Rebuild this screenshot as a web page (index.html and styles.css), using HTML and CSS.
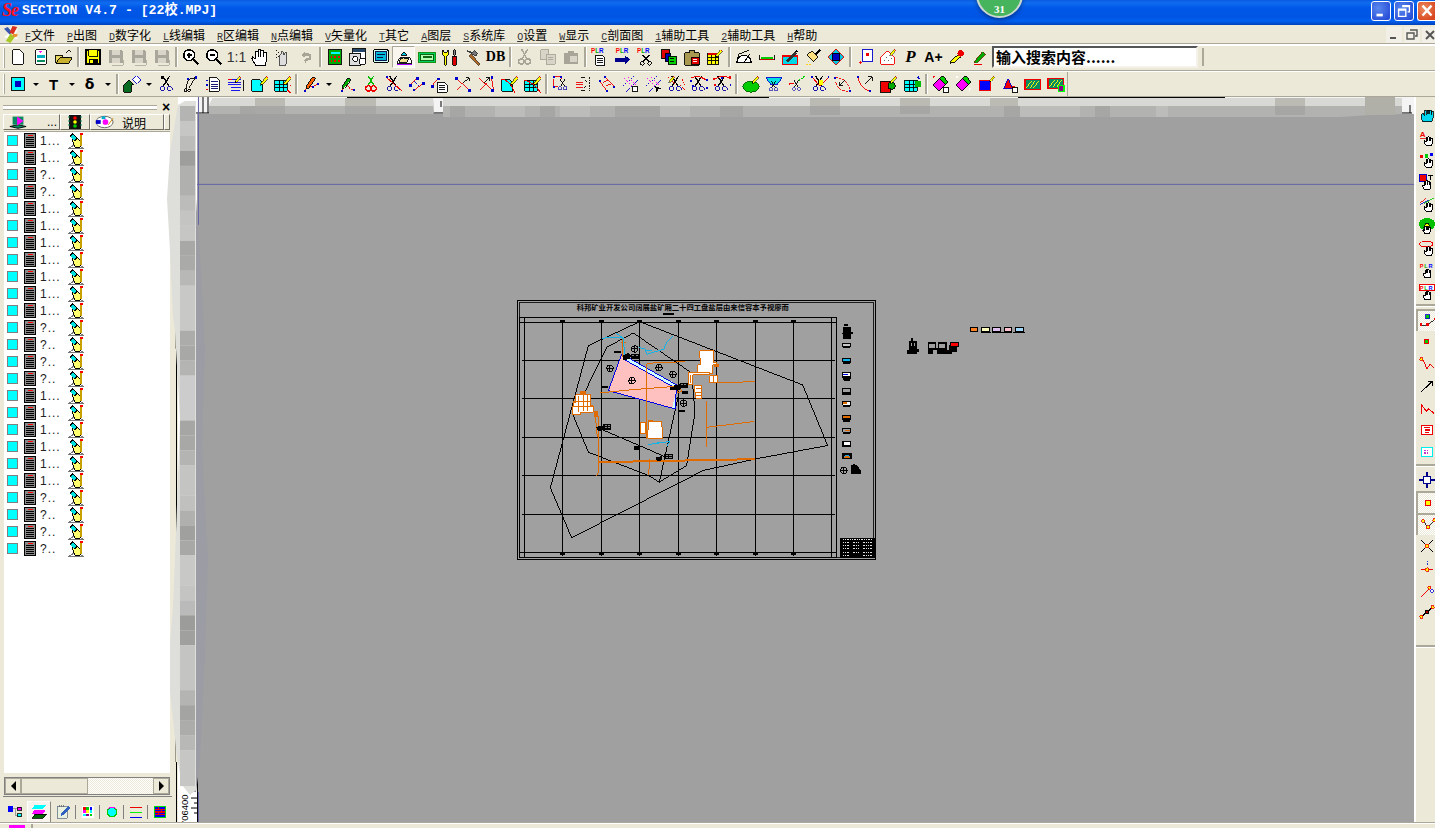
FILE: index.html
```html
<!DOCTYPE html>
<html lang="zh">
<head>
<meta charset="utf-8">
<title>SECTION V4.7 - [22校.MPJ]</title>
<link rel="stylesheet" href="styles.css">
</head>
<body>
<svg class="sprite" aria-hidden="true">
  <defs>
    <symbol id="hand" viewBox="0 0 20 20"><path d="M5 19L1 12l1-2 3 2V4h3v6V2h3v8V3h3v7V5h3v9l-1 5z" fill="#fff" stroke="#000" stroke-width="1" vector-effect="non-scaling-stroke"/></symbol>
    <symbol id="sc" viewBox="0 0 20 20"><path d="M5 1l7 11M13 1L6 12" stroke="#000" stroke-width="1.400" fill="none"/><circle cx="5" cy="15" r="2.600" fill="none" stroke="#00a"/><circle cx="13" cy="15" r="2.600" fill="none" stroke="#00a"/></symbol>
    <symbol id="pen" viewBox="0 0 20 20"><path d="M4 17l1-4 9-10 3 3-9 10z" fill="#ff0" stroke="#000"/><path d="M4 17l1-3 2 2z" fill="#000"/><path d="M14 3l3 3" stroke="#f00" stroke-width="1.400"/></symbol>
    <symbol id="grid" viewBox="0 0 20 20"><rect x="2" y="6" width="14" height="12" fill="#0ff"/><path d="M2 6h14M2 10h14M2 14h14M2 18h14M2 6v12M7 6v12M12 6v12M16 6v12" stroke="#000"/></symbol>
    <symbol id="cdoc" viewBox="0 0 20 20"><path d="M2 5h9l3 3v10H2z" fill="#0ff" stroke="#000"/></symbol>
    <symbol id="disk" viewBox="0 0 20 20"><path d="M2 2h14l2 2v13H2z" fill="#a9a69b"/><path d="M5 2h9v6H5zM5 11h9v6H5z" fill="#d9d6c9"/><path d="M6 19h12l1-6" fill="none" stroke="#b0ad9f"/></symbol>
    <symbol id="rowdoc" viewBox="0 0 12 15"><rect x=".5" y=".5" width="11" height="14" fill="#8a8a8a" stroke="#000"/><rect x="4" y="2" width="5" height="1" fill="#f00"/><path d="M2 4.500h8M2 6.500h8M2 8.500h8M2 10.500h8M2 12.500h8" stroke="#000"/></symbol>
    <symbol id="rowedit" viewBox="0 0 16 16"><path d="M0 15.500L8 11l8 4.500z" fill="#fff" stroke="#777"/><path d="M4 7l4-3 5 5-1 5H7z" fill="#ffff70" stroke="#000"/><path d="M1 3l3-3 6 5-3 3z" fill="#000"/><path d="M2 4l4 3 2-2-3-3z" fill="#00e0e0"/><rect x="12" y="2" width="2" height="11" fill="#c8a000"/><rect x="12" y="0" width="3" height="2" fill="#f00"/></symbol>
  </defs>
</svg>

<div class="app">
  <header class="titlebar">
    <span class="logo">S<i class="logo-e">e</i></span>
    <span class="title">SECTION V4.7 - [22校.MPJ]</span>
    <span class="badge">31</span>
    <div class="winbtns">
      <span class="wb"><svg class="wg" viewBox="0 0 20 20"><rect x="5" y="13" width="7" height="3" fill="#fff"/></svg></span>
      <span class="wb"><svg class="wg" viewBox="0 0 20 20"><path d="M8 4h8v7h-2M4 8h8v8H4z M4 9h8M8 5h8" fill="none" stroke="#fff" stroke-width="1.500"/></svg></span>
      <span class="wb close"><svg class="wg" viewBox="0 0 20 20"><path d="M5 4l10 11M15 4L5 15" stroke="#fff" stroke-width="2.600"/></svg></span>
    </div>
  </header>

  <nav class="menubar">
    <svg class="applogo" viewBox="0 0 17 20"><path d="M1 3l5 6-5 4 6 1 1 5 4-5 4 1-3-5 3-6-5 3-2-6-2 6z" fill="#fff"/><path d="M1 4l6 6 3-2-5-6z" fill="#3858b0"/><path d="M7 8l3-7 5 1-4 8z" fill="#d83020"/><path d="M3 17l5-8 5 3-5 7z" fill="#a8c828"/><path d="M11 9l5 1-2 3-4-1z" fill="#e89030"/></svg>
    <span class="mi"><u class="k">F</u>文件</span>
    <span class="mi"><u class="k">P</u>出图</span>
    <span class="mi"><u class="k">D</u>数字化</span>
    <span class="mi"><u class="k">L</u>线编辑</span>
    <span class="mi"><u class="k">R</u>区编辑</span>
    <span class="mi"><u class="k">N</u>点编辑</span>
    <span class="mi"><u class="k">V</u>矢量化</span>
    <span class="mi"><u class="k">T</u>其它</span>
    <span class="mi"><u class="k">A</u>图层</span>
    <span class="mi"><u class="k">S</u>系统库</span>
    <span class="mi"><u class="k">O</u>设置</span>
    <span class="mi"><u class="k">W</u>显示</span>
    <span class="mi"><u class="k">C</u>剖面图</span>
    <span class="mi"><u class="k">1</u>辅助工具</span>
    <span class="mi"><u class="k">2</u>辅助工具</span>
    <span class="mi"><u class="k">H</u>帮助</span>
    <div class="mdi">
      <span class="mb"><svg class="mg" viewBox="0 0 16 16"><rect x="4" y="10" width="6" height="2" fill="#555"/></svg></span>
      <span class="mb"><svg class="mg" viewBox="0 0 16 16"><path d="M6 3h7v6h-2M3 6h7v6H3z" fill="none" stroke="#555" stroke-width="1.400"/></svg></span>
      <span class="mb"><svg class="mg" viewBox="0 0 16 16"><path d="M4 4l8 8M12 4l-8 8" stroke="#555" stroke-width="2"/></svg></span>
    </div>
  </nav>

  <div class="toolbar first">
    <span class="grip"></span>
    <span class="b"><svg class="i" viewBox="0 0 20 20"><path d="M4 2h8l4 4v12H4z" fill="#fff" stroke="#000"/></svg></span>
    <span class="b"><svg class="i" viewBox="0 0 20 20"><path d="M4 2h12v16H4z" fill="#fff" stroke="#000"/><path d="M8 4h3M9.500 3v3" stroke="#f0f"/><path d="M6 8h8v3H6z" fill="#00b0c0"/><path d="M6 13h8v3H6z" fill="#0a8a60"/></svg></span>
    <span class="b"><svg class="i" viewBox="0 0 20 20"><path d="M1 8h7l1 2h6v7H1z" fill="#e8d860" stroke="#000"/><path d="M1 17l4-6h14l-4 6z" fill="#c8b030" stroke="#000"/><path d="M12 5l3-2 3 2" fill="none" stroke="#000"/></svg></span>
    <span class="sp"></span>
    <span class="b"><svg class="i" viewBox="0 0 20 20"><path d="M2 2h16v16H2z" fill="#ff0" stroke="#000" stroke-width="1.600"/><path d="M5 2h10v7H5z" fill="#ff0" stroke="#000"/><path d="M5 12h10v6H5z" fill="#000"/><path d="M7 13h3v4H7z" fill="#ff0"/></svg></span>
    <span class="b"><svg class="i"><use href="#disk"/></svg></span>
    <span class="b"><svg class="i"><use href="#disk"/></svg></span>
    <span class="b"><svg class="i"><use href="#disk"/></svg></span>
    <span class="sp"></span>
    <span class="b"><svg class="i" viewBox="0 0 20 20"><circle cx="8" cy="8" r="6" fill="#fff" stroke="#000" stroke-width="1.600"/><path d="M5 8h6M8 5v6" stroke="#000" stroke-width="1.600"/><path d="M13 13l5 5" stroke="#000" stroke-width="2.400"/></svg></span>
    <span class="b"><svg class="i" viewBox="0 0 20 20"><circle cx="8" cy="8" r="6" fill="#fff" stroke="#000" stroke-width="1.600"/><path d="M5 8h6" stroke="#000" stroke-width="1.600"/><path d="M13 13l5 5" stroke="#000" stroke-width="2.400"/></svg></span>
    <span class="b txt-ratio">1:1</span>
    <span class="b"><svg class="i"><use href="#hand"/></svg></span>
    <span class="b"><svg class="i" viewBox="0 0 20 20"><path d="M6 19V8l2-1V4h2v3h2V5h2v12l-1 2z" fill="#ddd" stroke="#444"/><path d="M2 3h1M4 5h1M2 7h1M4 9h1M2 11h1" stroke="#000"/></svg></span>
    <span class="b"><svg class="i" viewBox="0 0 20 20"><path d="M5 8l4-4v2h3a4 4 0 0 1 0 8h-2v3l-2-3 3-3h1a1 1 0 0 0 0-2H9v2z" fill="#a8a598"/></svg></span>
    <span class="sp"></span>
    <span class="b"><svg class="i" viewBox="0 0 20 20"><rect x="3" y="2" width="14" height="16" fill="#0a0" stroke="#000"/><path d="M5 4h10v3H5z" fill="#0ff"/><path d="M5 9h2v2H5zM9 9h2v2H9zM13 9h2v2h-2zM5 13h2v2H5zM9 13h2v2H9zM13 13h2v2h-2z" fill="#f00"/></svg></span>
    <span class="b"><svg class="i" viewBox="0 0 20 20"><rect x="4" y="1" width="14" height="12" fill="#fff" stroke="#000"/><rect x="4" y="1" width="14" height="3" fill="#246"/><rect x="1" y="6" width="12" height="13" fill="#ddd" stroke="#000"/><circle cx="7" cy="12" r="3" fill="#fff" stroke="#000"/><path d="M12 12h6v6h-6z" fill="#fff" stroke="#000"/></svg></span>
    <span class="b"><svg class="i" viewBox="0 0 20 20"><rect x="2" y="2" width="16" height="14" rx="1" fill="#cfe" stroke="#000" stroke-width="1.400"/><rect x="4" y="4" width="12" height="10" fill="#00b8d8" stroke="#004"/><path d="M6 7h8M6 10h6" stroke="#003"/></svg></span>
    <span class="b pressed"><svg class="i" viewBox="0 0 20 20"><path d="M2 17l3-6h12l2 6z" fill="#fff" stroke="#000"/><path d="M6 12l3-1 6 1-2 4H4z" fill="#f0e090" stroke="#000"/><path d="M7 8l3-4 3 4z" fill="#00c8e0" stroke="#000"/><path d="M2 18h17" stroke="#a0f" stroke-width="1.500"/></svg></span>
    <span class="b"><svg class="i" viewBox="0 0 20 20"><rect x="1" y="5" width="18" height="11" fill="#00d060" stroke="#080"/><rect x="3" y="7" width="14" height="7" fill="#b0ffb0" stroke="#050"/><path d="M5 9h10M5 11h10" stroke="#050"/></svg></span>
    <span class="b"><svg class="i" viewBox="0 0 20 20"><path d="M2 2v6l2 2v9h2V10l2-2V2L6 5H4z" fill="#ff0" stroke="#000"/><path d="M14 2h2v6h-2z" fill="#888" stroke="#000"/><path d="M13 9h4v10h-4z" fill="#d00" stroke="#000"/></svg></span>
    <span class="b"><svg class="i" viewBox="0 0 20 20"><path d="M3 3l6 2 3-2 3 3-2 3z" fill="#777" stroke="#333"/><path d="M8 7l10 11-2 1L6 9z" fill="#b06820" stroke="#543"/></svg></span>
    <span class="b txt-db">DB</span>
    <span class="sp"></span>
    <span class="b"><svg class="i" viewBox="0 0 20 20"><path d="M6 1l6 11M13 1L7 12" stroke="#a8a598" stroke-width="1.600"/><circle cx="6" cy="15" r="3" fill="none" stroke="#a8a598" stroke-width="1.600"/><circle cx="13" cy="15" r="3" fill="none" stroke="#a8a598" stroke-width="1.600"/></svg></span>
    <span class="b"><svg class="i" viewBox="0 0 20 20"><path d="M2 2h9v11H2z" fill="#d8d5c8" stroke="#a8a598"/><path d="M8 7h10v11H8z" fill="#d8d5c8" stroke="#a8a598"/><path d="M10 10h6M10 13h6" stroke="#a8a598"/></svg></span>
    <span class="b"><svg class="i" viewBox="0 0 20 20"><path d="M2 5h5V3h6v2h5v13H2z" fill="#a8a598"/><path d="M9 9h8v7H9z" fill="#d8d5c8"/></svg></span>
    <span class="sp"></span>
    <span class="b"><svg class="i" viewBox="0 0 20 20"><text class="plr" x="0" y="6"><tspan fill="#f00">P</tspan><tspan fill="#0a0">L</tspan><tspan fill="#00f">R</tspan></text><path d="M5 8h7l3 3v8H5z" fill="#fff" stroke="#000"/><path d="M7 12h6M7 14h6M7 16h6" stroke="#000"/></svg></span>
    <span class="b"><svg class="i" viewBox="0 0 20 20"><text class="plr" x="2" y="6"><tspan fill="#f00">P</tspan><tspan fill="#0a0">L</tspan><tspan fill="#00f">R</tspan></text><path d="M1 11h11V8l6 5-6 5v-3H1z" fill="#00008b"/></svg></span>
    <span class="b"><svg class="i" viewBox="0 0 20 20"><text class="plr" x="0" y="6"><tspan fill="#f00">P</tspan><tspan fill="#0a0">L</tspan><tspan fill="#00f">R</tspan></text><path d="M6 8l8 8M14 8l-8 8" stroke="#000" stroke-width="1.500"/><circle cx="6" cy="17" r="2" fill="none" stroke="#000"/><circle cx="14" cy="17" r="2" fill="none" stroke="#000"/></svg></span>
    <span class="b"><svg class="i" viewBox="0 0 20 20"><rect x="2" y="2" width="9" height="10" fill="#e00000" stroke="#000"/><rect x="6" y="6" width="6" height="9" fill="#0000b0" stroke="#000"/><rect x="9" y="9" width="9" height="9" fill="#00d000" stroke="#000"/><path d="M11 12h5M11 15h5" stroke="#000"/></svg></span>
    <span class="b"><svg class="i" viewBox="0 0 20 20"><path d="M2 5h5V3h6v2h5v14H2z" fill="#a89850" stroke="#000"/><rect x="9" y="10" width="9" height="8" fill="#e00000" stroke="#000"/><path d="M11 13h5M11 15h5" stroke="#fff"/></svg></span>
    <span class="b"><svg class="i" viewBox="0 0 20 20"><rect x="2" y="6" width="12" height="12" fill="#ff0" stroke="#000"/><path d="M2 10h12M2 14h12M6 6v12M10 6v12" stroke="#000"/><path d="M2 6h12v2H2z" fill="#d00"/><use href="#pen" x="8" y="0" width="12" height="12"/></svg></span>
    <span class="sp"></span>
    <span class="b"><svg class="i" viewBox="0 0 20 20"><path d="M2 16a8 8 0 0 1 16 0zM10 16l6-9" fill="#fff" stroke="#000" stroke-width="1.300"/><path d="M2 16l2-9 12-5" fill="none" stroke="#000"/></svg></span>
    <span class="b"><svg class="i" viewBox="0 0 20 20"><path d="M2 8v5h16V8" fill="none" stroke="#000"/><path d="M3 10h14v2H3z" fill="#0c0"/><path d="M2 13h16" stroke="#d00"/></svg></span>
    <span class="b"><svg class="i" viewBox="0 0 20 20"><path d="M2 9h16v9H2z" fill="#00d8e8" stroke="#e00" stroke-width="1.400"/><path d="M6 14l9-10 3 2-10 10z" fill="#333"/><path d="M15 4l3-2 1 3z" fill="#000"/></svg></span>
    <span class="b"><svg class="i" viewBox="0 0 20 20"><path d="M3 8l6-5 7 7-6 5z" fill="#ffe080" stroke="#000"/><path d="M13 7l5-5" stroke="#000" stroke-width="2.400"/><path d="M2 18h2M6 18h2M4 15h2" stroke="#fc0"/></svg></span>
    <span class="b"><svg class="i" viewBox="0 0 20 20"><path d="M1 10l9-9 9 9-9 9z" fill="#00c8e0" stroke="#e00"/><rect x="6" y="6" width="8" height="8" fill="#0000c0" stroke="#000"/></svg></span>
    <span class="sp"></span>
    <span class="b"><svg class="i" viewBox="0 0 20 20"><rect x="7" y="2" width="11" height="13" fill="#fff" stroke="#00c"/><rect x="11" y="5" width="3" height="4" fill="#e00"/><path d="M3 16h4M5 14v4" stroke="#e00"/></svg></span>
    <span class="b"><svg class="i" viewBox="0 0 20 20"><path d="M2 10l7-7 8 7v8H2z" fill="#fff" stroke="#e00"/><path d="M6 14h1M10 14h1M8 11h1M13 12h1" stroke="#555"/><use href="#pen" x="10" y="0" width="10" height="10"/></svg></span>
    <span class="b txt-p">P</span>
    <span class="b txt-a">A+</span>
    <span class="b"><svg class="i" viewBox="0 0 20 20"><path d="M2 17l2-4 8-6 2 3-7 6z" fill="#ff0" stroke="#000"/><circle cx="14" cy="6" r="3.500" fill="#e00"/></svg></span>
    <span class="b"><svg class="i" viewBox="0 0 20 20"><path d="M3 16l10-12 3 3L6 17z" fill="#0a0" stroke="#630"/><path d="M3 18h9" stroke="#e00" stroke-width="1.400"/></svg></span>
    <div class="search">输入搜索内容......</div>
    <span class="vgrip"></span>
  </div>

  <div class="toolbar second">
    <span class="grip"></span>
    <span class="b"><svg class="i" viewBox="0 0 20 20"><rect x="3" y="3" width="14" height="14" fill="#0ff" stroke="#000"/><rect x="7" y="7" width="6" height="6" fill="#0000c0"/></svg></span>
    <span class="ar"></span>
    <span class="b txt-t">T</span>
    <span class="ar"></span>
    <span class="b txt-d">δ</span>
    <span class="ar"></span>
    <span class="sp"></span>
    <span class="b"><svg class="i" viewBox="0 0 20 20"><path d="M1 19V11l6-6 5 5-3 2v7z" fill="#0a6a20" stroke="#000"/><path d="M11 5l4-4 4 4-4 4z" fill="#fff" stroke="#00c"/></svg></span>
    <span class="ar small"></span>
    <span class="b"><svg class="i"><use href="#sc"/><path d="M3 1h3v3H3z" fill="#000"/></svg></span>
    <span class="b"><svg class="i" viewBox="0 0 20 20"><path d="M16 3L8 5 5 15M16 3L9 14" fill="none" stroke="#000"/><circle cx="5" cy="17" r="1.500" fill="none" stroke="#000"/><circle cx="9" cy="17" r="1.500" fill="none" stroke="#000"/><path d="M7 3h2v2H7zM15 1h3v3h-3z" fill="#00c"/></svg></span>
    <span class="b"><svg class="i" viewBox="0 0 20 20"><path d="M2 5h2v2H2zM2 10h2v2H2z" fill="#00c"/><path d="M2 15h2v2H2z" fill="#e00"/><path d="M6 3h8l3 3v12H6z" fill="#fff" stroke="#000"/><path d="M8 7h7M8 10h7M8 13h7M8 15h7" stroke="#006"/></svg></span>
    <span class="b"><svg class="i" viewBox="0 0 20 20"><path d="M1 5h14M1 8h14M1 11h14M4 14h12M4 17h10" stroke="#00e"/><path d="M1 5h5" stroke="#f00"/><path d="M18 6v12" stroke="#000"/><use href="#pen" x="6" y="0" width="12" height="10"/></svg></span>
    <span class="b"><svg class="i"><use href="#cdoc"/><use href="#pen" x="8" y="0" width="12" height="12"/></svg></span>
    <span class="b"><svg class="i"><use href="#grid"/><use href="#pen" x="8" y="0" width="12" height="12"/><path d="M14 15l4 3M17 10l2 2" stroke="#e00"/></svg></span>
    <span class="sp"></span>
    <span class="b"><svg class="i" viewBox="0 0 20 20"><path d="M3 18l4-6 5 1 6-3" fill="none" stroke="#e00"/><path d="M2 17h2v2H2zM11 12h2v2h-2zM17 9h2v2h-2z" fill="#00c"/><path d="M5 12l7-10 3 2-7 10-3 1z" fill="#ff6000" stroke="#000"/></svg></span>
    <span class="ar wide"></span>
    <span class="b"><svg class="i" viewBox="0 0 20 20"><path d="M3 18l5-8 5 6 4 1" fill="none" stroke="#e00"/><path d="M2 17h2v2H2zM16 16h2v2h-2z" fill="#00c"/><path d="M4 12l6-9 3 2-7 9-2 1z" fill="#0a0" stroke="#000"/></svg></span>
    <span class="b"><svg class="i" viewBox="0 0 20 20"><path d="M7 1l6 10M13 1L7 11" stroke="#0b0" stroke-width="1.500"/><circle cx="7" cy="15" r="3" fill="none" stroke="#e00" stroke-width="1.400"/><circle cx="13" cy="15" r="3" fill="none" stroke="#e00" stroke-width="1.400"/></svg></span>
    <span class="b"><svg class="i"><use href="#sc"/><path d="M1 2l16 14" stroke="#e00"/><path d="M1 1h2v2H1z" fill="#00c"/></svg></span>
    <span class="b"><svg class="i" viewBox="0 0 20 20"><path d="M2 11l8-8M7 17l10-8" stroke="#e00"/><path d="M7 7l6 6" stroke="#00c" stroke-dasharray="2 1"/><path d="M1 10h3v3H1zM9 2h3v3H9zM5 15h3v3H5zM16 8h3v3h-3z" fill="#00c"/></svg></span>
    <span class="b"><svg class="i" viewBox="0 0 20 20"><path d="M1 12l7-8" stroke="#e00"/><path d="M0 11h3v3H0zM7 3h3v3H7z" fill="#00c"/><path d="M7 8h8l3 3v8H7z" fill="#fff" stroke="#000"/><path d="M9 12h7M9 14h7M9 16h7" stroke="#000"/></svg></span>
    <span class="b"><svg class="i" viewBox="0 0 20 20"><path d="M2 3l16 15M3 17l5-5" stroke="#e00"/><path d="M1 2h3v3H1zM16 16h3v3h-3z" fill="#00c"/><path d="M10 9l7-6M13 3h4v4" fill="none" stroke="#000"/></svg></span>
    <span class="b"><svg class="i" viewBox="0 0 20 20"><path d="M2 3l16 15M3 17l8-8" stroke="#e00"/><path d="M16 2l2 13" stroke="#e00"/><path d="M15 1h3v3h-3zM16 16h3v3h-3z" fill="#00c"/><path d="M8 9l6-6M10 3h4v4" fill="none" stroke="#000"/></svg></span>
    <span class="b"><svg class="i"><use href="#cdoc"/><path d="M1 4q8 0 14 14" fill="none" stroke="#e00"/><use href="#pen" x="8" y="0" width="12" height="12"/></svg></span>
    <span class="b"><svg class="i"><use href="#grid"/><use href="#pen" x="8" y="0" width="12" height="12"/><path d="M1 5q10 2 17 13" fill="none" stroke="#e00"/></svg></span>
    <span class="sp"></span>
    <span class="b"><svg class="i" viewBox="0 0 20 20"><path d="M2 2h8v2M2 4v9h5" fill="none" stroke="#e00"/><path d="M1 1h2v2H1zM9 1h2v2H9zM1 12h2v2H1z" fill="#00c"/><use href="#sc" x="5" y="2" width="15" height="18"/></svg></span>
    <span class="b"><svg class="i" viewBox="0 0 20 20"><path d="M1 8h8M1 11h8M1 14h8" stroke="#e00"/><path d="M11 6l2 2M11 14l2-2M7 3h4M7 17h4" stroke="#000"/><path d="M16 2v16" stroke="#000" stroke-dasharray="2 1"/></svg></span>
    <span class="b"><svg class="i" viewBox="0 0 20 20"><path d="M2 7l8 11M8 2l10 11M6 8l5-2M9 12l5-2" stroke="#e00"/><path d="M7 1h2v2H7zM1 6h2v2H1zM17 12h2v2h-2zM9 17h2v2H9z" fill="#00c"/></svg></span>
    <span class="b"><svg class="i" viewBox="0 0 20 20"><path d="M2 12L14 2M6 18L18 6" stroke="#00c" stroke-dasharray="2 1"/><path d="M3 3l12 12M8 2l9 9" stroke="#f0f" stroke-dasharray="2 2"/><rect x="13" y="13" width="5" height="5" fill="#fff" stroke="#000"/></svg></span>
    <span class="b"><svg class="i" viewBox="0 0 20 20"><path d="M2 12L14 2M6 18L18 6" stroke="#00c" stroke-dasharray="2 1"/><path d="M3 3l12 12M8 2l9 9" stroke="#f0f" stroke-dasharray="2 2"/><path d="M12 12l2 7 2-3 3-1z" fill="#000"/></svg></span>
    <span class="b"><svg class="i"><use href="#sc"/><path d="M1 2l7 7M15 4l4 8M13 10l6 6" stroke="#e00" stroke-dasharray="2 1"/><use href="#pen" x="0" y="0" width="9" height="9"/></svg></span>
    <span class="b"><svg class="i"><use href="#sc"/><path d="M1 3q8-4 16 3" fill="none" stroke="#e00"/><path d="M0 5h2v2H0zM16 4h2v2h-2zM2 10h2v2H2zM16 12h2v2h-2z" fill="#00c"/></svg></span>
    <span class="b"><svg class="i"><use href="#sc"/><path d="M1 5q8-7 17-1" fill="none" stroke="#e00"/><path d="M0 3h2v2H0zM16 1h2v2h-2zM1 9h2v2H1z" fill="#e00"/><path d="M17 9h2v2h-2zM8 2h2v2H8z" fill="#00c"/></svg></span>
    <span class="sp"></span>
    <span class="b"><svg class="i" viewBox="0 0 20 20"><path d="M1 13a9 6 0 0 1 18 0 9 6 0 0 1-18 0z" fill="#0c0" stroke="#060"/><use href="#pen" x="9" y="0" width="11" height="11"/></svg></span>
    <span class="b"><svg class="i" viewBox="0 0 20 20"><path d="M1 3h18l-5 7H6z" fill="#00e0e0" stroke="#00c"/><use href="#sc" x="3" y="5" width="14" height="15"/></svg></span>
    <span class="b"><svg class="i" viewBox="0 0 20 20"><path d="M1 10l6-1" stroke="#e00" stroke-width="1.500"/><path d="M12 6l7-5" stroke="#0c0" stroke-width="1.500" stroke-dasharray="2 1"/><use href="#sc" x="3" y="4" width="14" height="16"/></svg></span>
    <span class="b"><svg class="i"><use href="#sc"/><path d="M1 2l7 8 2 0 8-8" fill="none" stroke="#e00"/><path d="M0 1h2v2H0zM17 1h2v2h-2z" fill="#00c"/><path d="M8 5h4v5H8z" fill="#ff0"/></svg></span>
    <span class="b"><svg class="i" viewBox="0 0 20 20"><path d="M1 3q14 0 17 15" fill="none" stroke="#e00" stroke-dasharray="3 1"/><path d="M2 8q2 10 14 10" fill="none" stroke="#e00" stroke-dasharray="3 1"/><path d="M12 6l-6 6M6 8v4h4" fill="none" stroke="#000"/><path d="M0 2h2v2H0zM17 17h2v2h-2z" fill="#00c"/></svg></span>
    <span class="b"><svg class="i" viewBox="0 0 20 20"><path d="M1 2q2 12 13 16" fill="none" stroke="#e00"/><path d="M9 10l8-8M12 2h5v5" fill="none" stroke="#000"/><path d="M0 1h2v2H0zM13 17h2v2h-2z" fill="#00c"/></svg></span>
    <span class="b"><svg class="i" viewBox="0 0 20 20"><rect x="1" y="7" width="11" height="12" fill="#e00" stroke="#000"/><circle cx="13" cy="12" r="4" fill="#0a0" stroke="#000"/><use href="#pen" x="9" y="0" width="11" height="11"/></svg></span>
    <span class="b"><svg class="i"><use href="#grid"/><circle cx="15" cy="9" r="3.500" fill="#0b0"/><path d="M13 3l3-2 1 3" fill="#00c"/></svg></span>
    <span class="sp"></span>
    <span class="b"><svg class="i" viewBox="0 0 20 20"><path d="M1 11l7-7 7 7-7 7z" fill="#f0f" stroke="#000"/><path d="M8 4l4-3 6 7-3 3z" fill="#0c0" stroke="#000"/><path d="M1 2h2M2 1v2" stroke="#e00"/><rect x="13" y="14" width="5" height="5" fill="#fff" stroke="#000"/></svg></span>
    <span class="b"><svg class="i" viewBox="0 0 20 20"><path d="M1 11l7-7 7 7-7 7z" fill="#f0f" stroke="#000"/><path d="M8 4l4-3 6 7-3 3z" fill="#0c0" stroke="#000"/><path d="M1 1l2 2M3 1L1 3M15 15h3M16.500 14v4" stroke="#fff"/></svg></span>
    <span class="b"><svg class="i" viewBox="0 0 20 20"><rect x="2" y="6" width="12" height="11" fill="#00f" stroke="#e00" stroke-width="1.400"/><use href="#pen" x="11" y="0" width="9" height="9"/></svg></span>
    <span class="b"><svg class="i" viewBox="0 0 20 20"><path d="M3 15L8 4l5 11z" fill="#e00" stroke="#00c"/><path d="M12 12h4v3h-4z" fill="#e00"/><rect x="13" y="14" width="5" height="5" fill="#fff" stroke="#000"/></svg></span>
    <span class="b"><svg class="i" viewBox="0 0 20 20"><rect x="1" y="5" width="17" height="11" fill="#0a8a60" stroke="#e00" stroke-width="1.400"/><path d="M3 14l5-7M7 14l5-7M11 14l5-7" stroke="#ff0"/></svg></span>
    <span class="b"><svg class="i" viewBox="0 0 20 20"><rect x="1" y="4" width="17" height="11" fill="#0a8a60" stroke="#e00" stroke-width="1.400"/><path d="M3 13l5-7M7 13l5-7M11 13l5-7" stroke="#ff0"/><rect x="13" y="12" width="6" height="6" fill="#808" stroke="#0f0" stroke-width="1.400"/></svg></span>
    <span class="end"></span>
  </div>

  <main class="main">
    <aside class="side">
      <div class="side-top"><span class="side-grip"></span><span class="side-x">×</span></div>
      <div class="cols">
        <span class="col col-a"><svg class="ci" viewBox="0 0 20 14"><path d="M1 12l9-2 9 2-9 2z" fill="#0a8a60" stroke="#000"/><path d="M4 1h12v9H4z" fill="#0a8a60"/><path d="M9 1l7 5-7 5z" fill="#f0f"/></svg><span class="dots">...</span></span>
        <span class="col col-b"><svg class="ci" viewBox="0 0 14 14"><path d="M1 0h12v14H1z" fill="#111"/><circle cx="7" cy="3" r="1.800" fill="#f00"/><circle cx="7" cy="7" r="1.800" fill="#ff0"/><circle cx="7" cy="11" r="1.800" fill="#0c0"/><path d="M0 2h2M12 2h2M0 6h2M12 6h2M0 10h2M12 10h2" stroke="#0a8a60"/></svg></span>
        <span class="col col-c"><svg class="cp" viewBox="0 0 20 14"><ellipse cx="10" cy="7" rx="9" ry="6" fill="#fff" stroke="#666"/><path d="M1 5h5v4H1z" fill="#00c"/><circle cx="11" cy="7" r="3" fill="#f0f"/><path d="M7 1h4v3H7z" fill="#0ac"/><path d="M14 10l5-7" stroke="#c80"/></svg><b class="say">说明</b></span>
        <span class="col col-d"></span>
      </div>
      <ul class="list">
        <li class="row"><span class="cb"></span><svg class="rd"><use href="#rowdoc"/></svg><span class="rt">1...</span><svg class="re"><use href="#rowedit"/></svg></li>
        <li class="row"><span class="cb"></span><svg class="rd"><use href="#rowdoc"/></svg><span class="rt">1...</span><svg class="re"><use href="#rowedit"/></svg></li>
        <li class="row"><span class="cb"></span><svg class="rd"><use href="#rowdoc"/></svg><span class="rt">?..</span><svg class="re"><use href="#rowedit"/></svg></li>
        <li class="row"><span class="cb"></span><svg class="rd"><use href="#rowdoc"/></svg><span class="rt">?..</span><svg class="re"><use href="#rowedit"/></svg></li>
        <li class="row"><span class="cb"></span><svg class="rd"><use href="#rowdoc"/></svg><span class="rt">1...</span><svg class="re"><use href="#rowedit"/></svg></li>
        <li class="row"><span class="cb"></span><svg class="rd"><use href="#rowdoc"/></svg><span class="rt">1...</span><svg class="re"><use href="#rowedit"/></svg></li>
        <li class="row"><span class="cb"></span><svg class="rd"><use href="#rowdoc"/></svg><span class="rt">1...</span><svg class="re"><use href="#rowedit"/></svg></li>
        <li class="row"><span class="cb"></span><svg class="rd"><use href="#rowdoc"/></svg><span class="rt">1...</span><svg class="re"><use href="#rowedit"/></svg></li>
        <li class="row"><span class="cb"></span><svg class="rd"><use href="#rowdoc"/></svg><span class="rt">1...</span><svg class="re"><use href="#rowedit"/></svg></li>
        <li class="row"><span class="cb"></span><svg class="rd"><use href="#rowdoc"/></svg><span class="rt">1...</span><svg class="re"><use href="#rowedit"/></svg></li>
        <li class="row"><span class="cb"></span><svg class="rd"><use href="#rowdoc"/></svg><span class="rt">1...</span><svg class="re"><use href="#rowedit"/></svg></li>
        <li class="row"><span class="cb"></span><svg class="rd"><use href="#rowdoc"/></svg><span class="rt">?..</span><svg class="re"><use href="#rowedit"/></svg></li>
        <li class="row"><span class="cb"></span><svg class="rd"><use href="#rowdoc"/></svg><span class="rt">?..</span><svg class="re"><use href="#rowedit"/></svg></li>
        <li class="row"><span class="cb"></span><svg class="rd"><use href="#rowdoc"/></svg><span class="rt">?..</span><svg class="re"><use href="#rowedit"/></svg></li>
        <li class="row"><span class="cb"></span><svg class="rd"><use href="#rowdoc"/></svg><span class="rt">?..</span><svg class="re"><use href="#rowedit"/></svg></li>
        <li class="row"><span class="cb"></span><svg class="rd"><use href="#rowdoc"/></svg><span class="rt">1...</span><svg class="re"><use href="#rowedit"/></svg></li>
        <li class="row"><span class="cb"></span><svg class="rd"><use href="#rowdoc"/></svg><span class="rt">1...</span><svg class="re"><use href="#rowedit"/></svg></li>
        <li class="row"><span class="cb"></span><svg class="rd"><use href="#rowdoc"/></svg><span class="rt">1...</span><svg class="re"><use href="#rowedit"/></svg></li>
        <li class="row"><span class="cb"></span><svg class="rd"><use href="#rowdoc"/></svg><span class="rt">1...</span><svg class="re"><use href="#rowedit"/></svg></li>
        <li class="row"><span class="cb"></span><svg class="rd"><use href="#rowdoc"/></svg><span class="rt">1...</span><svg class="re"><use href="#rowedit"/></svg></li>
        <li class="row"><span class="cb"></span><svg class="rd"><use href="#rowdoc"/></svg><span class="rt">1...</span><svg class="re"><use href="#rowedit"/></svg></li>
        <li class="row"><span class="cb"></span><svg class="rd"><use href="#rowdoc"/></svg><span class="rt">?..</span><svg class="re"><use href="#rowedit"/></svg></li>
        <li class="row"><span class="cb"></span><svg class="rd"><use href="#rowdoc"/></svg><span class="rt">?..</span><svg class="re"><use href="#rowedit"/></svg></li>
        <li class="row"><span class="cb"></span><svg class="rd"><use href="#rowdoc"/></svg><span class="rt">?..</span><svg class="re"><use href="#rowedit"/></svg></li>
        <li class="row"><span class="cb"></span><svg class="rd"><use href="#rowdoc"/></svg><span class="rt">?..</span><svg class="re"><use href="#rowedit"/></svg></li>
      </ul>
      <div class="hscroll">
        <span class="sb"><i class="tri-l"></i></span>
        <span class="thumb"></span>
        <span class="track"></span>
        <span class="sb"><i class="tri-r"></i></span>
      </div>
      <div class="tabs">
        <span class="tab wide"><svg class="i" viewBox="0 0 20 20"><rect x="1" y="3" width="7" height="7" fill="#00f"/><path d="M8 6h5M10 6v8h3" fill="none" stroke="#888"/><rect x="13" y="4" width="5" height="4" fill="#f0f" stroke="#000"/><rect x="13" y="12" width="5" height="4" fill="#0ff" stroke="#000"/></svg></span>
        <span class="tab wide on"><svg class="i" viewBox="0 0 20 20"><path d="M5 1h14l-4 5H1z" fill="#0ff"/><path d="M5 7h14l-4 5H1z" fill="#f0f"/><path d="M5 13h14l-4 5H1z" fill="#060" stroke="#000"/></svg></span>
        <span class="tab wide"><svg class="i" viewBox="0 0 20 20"><path d="M3 3h12v15H3z" fill="#e8f0e0" stroke="#678"/><path d="M5 1v3M8 1v3M11 1v3" stroke="#666"/><path d="M7 15l1-3 9-9 2 2-9 9z" fill="#3060c0"/></svg></span>
        <span class="tsep"></span>
        <span class="tab"><svg class="i" viewBox="0 0 20 20"><rect x="3" y="3" width="14" height="14" fill="#fff"/><path d="M4 4h3v3H4z" fill="#e00"/><path d="M8 4h3v3H8z" fill="#0c0"/><path d="M12 4h3v3h-3z" fill="#00f"/><path d="M4 8h3v3H4z" fill="#f0f"/><path d="M8 8h3v3H8z" fill="#ff0"/><path d="M12 8h3v3h-3z" fill="#0ff"/><path d="M4 12h3v3H4z" fill="#0ff"/><path d="M8 12h3v3H8z" fill="#808"/><path d="M12 12h3v3h-3z" fill="#0c0"/></svg></span>
        <span class="tsep"></span>
        <span class="tab"><svg class="i" viewBox="0 0 20 20"><circle cx="10" cy="10" r="6" fill="#0ff" stroke="#0c0" stroke-width="1.400"/><path d="M5 6a7 7 0 0 1 10 0" fill="none" stroke="#f0f" stroke-width="1.400"/></svg></span>
        <span class="tsep"></span>
        <span class="tab"><svg class="i" viewBox="0 0 20 20"><path d="M2 4.500h16" stroke="#e00" stroke-width="1.300"/><path d="M2 10.500h16" stroke="#0e0" stroke-width="1.300"/><path d="M2 16.500h16" stroke="#00e" stroke-width="1.300"/></svg></span>
        <span class="tsep"></span>
        <span class="tab"><svg class="i" viewBox="0 0 20 20"><rect x="3" y="3" width="14" height="14" fill="#00e" stroke="#0d0" stroke-width="1.400"/><path d="M4 7h12M4 10h12M4 13h12M8 4v3M12 7v3M8 10v3" stroke="#e00" stroke-width="1.400"/></svg></span>
      </div>
    </aside>

    <section class="work">
      <svg class="canvas" viewBox="172 96 1242 727" preserveAspectRatio="none">
        <rect x="172" y="96" width="1242" height="727" fill="#a0a0a0"/>
        <!-- ruler strips -->
        <rect x="172" y="96" width="6" height="727" fill="#ece9d8"/>
        <rect x="178" y="96" width="19" height="727" fill="#fff"/>
        <rect x="197" y="96" width="1217" height="17" fill="#f4f4f4"/>
        <path d="M175.500 320v28M175.500 715v47" stroke="#9a9888"/>
        <path d="M176.500 348v200M176.500 762v61M197.500 762v61" stroke="#000"/>
        <path d="M193 112h16M433 112h10M1368 112h19M1398 112h14M347 96.500h422M1018 96.500h207" stroke="#000"/>
        <path d="M198.500 96v128M198.500 792v31" stroke="#6464a8"/>
        <path d="M197 183.500h1217" stroke="#6464a8"/>
        <path d="M203 96v16M208 96v16M441 100v6M1410 104v8" stroke="#000"/>
        <text class="ruler" transform="translate(188 826) rotate(-90)">706400</text>
        <path d="M191 798h6M191 808h6M194 803h3M194 813h3" stroke="#000"/>

        <!-- masked strip: left column -->
        <path d="M195 104L196 198L200 254L205 348L202 447L208 560L205 654L200 762L196 792L190 792z" fill="#9c9ca4"/>
        <path d="M178 104L170 151L167 198L170 250L173 315L175 330L180 419L175 560L173 607L170 644L170 691L177 757L182 785L190 795L196 790V100H185z" fill="#dedeDA"/>
        <g>
          <rect x="180" y="105" width="15" height="15" fill="#b4b4b2"/><rect x="180" y="120" width="15" height="15" fill="#c6c6c4"/><rect x="180" y="135" width="15" height="15" fill="#bcbcba"/><rect x="180" y="150" width="15" height="15" fill="#9e9e9c"/>
          <rect x="180" y="165" width="15" height="30" fill="#b0b0ae"/><rect x="180" y="195" width="15" height="15" fill="#bcbcba"/><rect x="180" y="210" width="15" height="15" fill="#c4c4c2"/><rect x="180" y="225" width="15" height="15" fill="#c6c6c4"/>
          <rect x="180" y="240" width="15" height="15" fill="#a8a8a6"/><rect x="180" y="255" width="15" height="15" fill="#aaaaa8"/><rect x="180" y="270" width="15" height="15" fill="#b8b8b6"/><rect x="180" y="285" width="15" height="45" fill="#c8c8c6"/>
          <rect x="180" y="330" width="15" height="15" fill="#acacaa"/><rect x="180" y="345" width="15" height="15" fill="#a8a8a6"/><rect x="180" y="360" width="15" height="15" fill="#b4b4b2"/><rect x="180" y="375" width="15" height="45" fill="#cccccc"/>
          <rect x="180" y="420" width="15" height="15" fill="#a6a6a4"/><rect x="180" y="435" width="15" height="15" fill="#a8a8a6"/><rect x="180" y="450" width="15" height="15" fill="#b4b4b2"/><rect x="180" y="465" width="15" height="30" fill="#c4c4c2"/>
          <rect x="180" y="495" width="15" height="15" fill="#c0c0be"/><rect x="180" y="510" width="15" height="15" fill="#b0b0ae"/><rect x="180" y="525" width="15" height="15" fill="#a0a09e"/><rect x="180" y="540" width="15" height="15" fill="#a8a8a6"/>
          <rect x="180" y="555" width="15" height="30" fill="#c8c8c6"/><rect x="180" y="585" width="15" height="15" fill="#c4c4c2"/><rect x="180" y="600" width="15" height="15" fill="#bababa"/><rect x="180" y="615" width="15" height="15" fill="#9c9c9a"/>
          <rect x="180" y="630" width="15" height="15" fill="#a0a09e"/><rect x="180" y="645" width="15" height="45" fill="#c4c4c2"/><rect x="180" y="690" width="15" height="15" fill="#b4b4b2"/><rect x="180" y="705" width="15" height="15" fill="#a4a4a2"/>
          <rect x="180" y="720" width="15" height="15" fill="#acacaa"/><rect x="180" y="735" width="15" height="15" fill="#b8b8b6"/><rect x="180" y="750" width="15" height="36" fill="#c6c6c4"/>
        </g>

        <!-- masked strip: top -->
        <path d="M209 105L213 97H433L434 112 432 113H209zM443 112V97H1402V113L1370 114L1340 116H443z" fill="#b2b2b0"/>
        <path d="M209 105L213 97H433V105zM443 105V97H1402V105z" fill="#d8d8d4"/>
        <path d="M255 97h30v8h-30zM345 97h31v8h-31zM810 97h30v8h-30zM900 97h30v8h-30zM990 97h28v8h-28zM1275 97h30v8h-30z" fill="#bbbbb3"/>
        <path d="M240 105h15v8h-15zM450 105h15v11h-15zM540 105h15v11h-15zM615 105h45v11h-45zM720 105h23v11h-23zM810 105h30v9h-30zM900 105h30v8h-30zM1004 105h16v11h-16zM1095 105h15v11h-15zM1275 105h30v9h-30z" fill="#a6a6a4"/>
        <path d="M255 105h30v8h-30zM345 105h31v8h-31z" fill="#a8a8a6"/>
        <path d="M1020 105h60v11h-60zM1156 105h12v11h-12zM495 105h30v11h-30zM560 105h30v11h-30zM660 105h30v11h-30z" fill="#bcbcba"/>
        <rect x="1365" y="92" width="30" height="22" fill="#b0b0a8"/>

        <!-- plan drawing -->
        <g class="plan" transform="translate(510 295) scale(.33333)">
          <rect x="23" y="14" width="1074" height="778" fill="none" stroke="#000" stroke-width="4"/>
          <rect x="29" y="20" width="1062" height="766" fill="none" stroke="#000" stroke-width="2.500"/>
          <path d="M560 14h537" stroke="#000" stroke-width="3"/>
          <text class="plan-title" x="200" y="42">科邦矿业开发公司阔展盐矿厢二十四工盘盐层由来信容本予视廖而</text>
          <rect x="458" y="52" width="35" height="6" fill="#000"/>
          <rect x="29" y="66" width="951" height="720" fill="none" stroke="#000" stroke-width="4"/>
          <path d="M43 66v720M966 66v720M29 80h951M29 772h951" stroke="#000" stroke-width="3"/>
          <path d="M157 72v710M274 72v710M389 72v710M505 72v710M619 72v710M737 72v710M851 72v710M35 195h940M35 310h940M35 425h940M35 540h940M35 656h940" stroke="#000" stroke-width="3"/>
          <path d="M150 76h14M267 76h14M382 76h14M498 76h14M612 76h14M730 76h14M844 76h14M150 775h14M267 775h14M382 775h14M498 775h14M612 775h14M730 775h14M844 775h14" stroke="#000" stroke-width="6"/>

          <path d="M389 78L878 268 953 450 738 490 580 525 185 727 121 577 235 150z" fill="none" stroke="#000" stroke-width="3"/>
          <path d="M370 112L290 155 190 360 235 470 415 540 448 560 530 510 555 350 545 232 370 112" fill="none" stroke="#000" stroke-width="3"/>
          <path d="M505 300L448 560M260 395L480 490" fill="none" stroke="#000" stroke-width="3"/>

          <path d="M335 175L500 268 495 340 295 285z" fill="#ffc0c0"/>
          <path d="M340 178L500 266 498 278 345 193zM500 278L495 338 487 336z" fill="#d0ffff"/>
          <path d="M335 175L500 268 495 340 295 285zM345 193L497 278" fill="none" stroke="#0000e8" stroke-width="3"/>

          <g fill="none" stroke="#e06c00" stroke-width="3">
            <path d="M270 292L370 282 500 272"/>
            <path d="M410 205v225M410 203L525 198"/>
            <path d="M265 500L735 491" stroke-width="6"/>
            <path d="M265 360v170l-6 12M255 350L262 425"/>
            <path d="M590 315v140M592 395L732 378M620 262L735 258"/>
            <path d="M415 540L420 490M500 290q14-15 14-2-4 4-14 2"/>
            <path d="M333 142h14M338 125v60"/>
          </g>
          <g fill="#fff" stroke="#e06c00" stroke-width="3">
            <path d="M570 166h42v36h8v6h-12v26h-45v-26h10v-20h-3z"/>
            <path d="M535 232h65v6h-52v28h-13z"/>
            <path d="M600 240h24v22h-24zM553 270h22v38h-18z"/>
            <path d="M415 378h40l3 50h-45zM392 380h15v34h-15z"/>
            <path d="M190 320h8v-22h44v32h8v20h-38v8h-25z"/>
          </g>
          <path d="M205 300h3v50h-3zM218 296h3v50h-3zM232 296h3v50h-3zM190 315h52v3h-52zM190 332h60v3h-60zM558 278h14v3h-14zM558 288h14v3h-14zM558 298h14v3h-14zM610 240h3v20h-3zM540 238h3v25h-3z" fill="#e06c00"/>
          <path d="M252 345h11v20h-11zM210 286h18v8h-18zM415 372h15v8h-15zM612 204h14v10h-14z" fill="#e06c00"/>

          <g fill="none" stroke="#10b4e8" stroke-width="3">
            <path d="M275 128L318 124 340 128 345 190M318 112l22 15"/>
            <path d="M388 156L405 160 410 176 430 170 462 160 470 140 490 120M405 165h22"/>
            <path d="M415 447L480 438 470 452M440 440h25"/>
          </g>

          <g fill="#000">
            <path d="M312 166h22v7h-22zM275 270h18v8h-18zM480 275h22v8h-22zM515 287h20v7h-20zM505 343h20v5h-20z"/>
            <path d="M338 180l18-8 8 8-6 10-20 4zM490 268l22-2 2 14-12 6-8-8z"/>
            <path d="M258 394l20-4 4 12-18 6zM372 452h16v12h-16zM437 486l18-4 2 12-16 4z"/>
            <rect x="280" y="385" width="23" height="18"/><rect x="510" y="262" width="23" height="16"/><rect x="463" y="475" width="26" height="17"/><rect x="362" y="175" width="26" height="15"/>
          </g>
          <path d="M284 390h6M293 390h6M284 397h6M293 397h6M514 267h6M523 267h6M467 480h7M478 480h7M467 486h7M478 486h7M366 180h7M377 180h7" stroke="#a0a0a0" stroke-width="2.500"/>
          <g fill="none" stroke="#000" stroke-width="3">
            <circle cx="374" cy="160" r="10"/><circle cx="300" cy="218" r="10"/><circle cx="447" cy="216" r="10"/><circle cx="489" cy="236" r="10"/><circle cx="366" cy="255" r="10"/><circle cx="521" cy="323" r="10"/>
            <path d="M364 160h20M374 150v20M290 218h20M300 208v20M437 216h20M447 206v20M479 236h20M489 226v20M356 255h20M366 245v20M511 323h20M521 313v20"/>
          </g>

          <!-- legend -->
          <g fill="#000">
            <path d="M998 94h26v9h-26zM1003 84h12v6h-12zM996 116h32v-6h-4v-6h-24zM998 116h24v14h-24z"/>
            <path d="M997 142h26v10l-4 6h-18l-4-6z"/><path d="M997 187h26v12l-4 6h-18l-4-6z"/><path d="M997 229h26v18l-4 8h-18l-4-8z"/><path d="M997 277h26v20h-26z"/><path d="M997 317h26v12l-4 6h-18l-4-6z"/><path d="M997 357h26v14l-4 8h-18l-4-8z"/><path d="M997 397h26v12l-4 6h-18l-4-6z"/><path d="M997 435h26v18h-26z"/><path d="M997 472h28v18h-28z"/>
            <path d="M1024 510l8-4 12 6 6 10 3 4v10h-29z"/>
          </g>
          <rect x="1000" y="146" width="20" height="4" fill="#c8c8c8"/><rect x="1000" y="190" width="20" height="5" fill="#10b4e8"/><rect x="1000" y="232" width="20" height="9" fill="#fff"/><path d="M1000 236h14" stroke="#0000e8" stroke-width="3"/><rect x="1000" y="281" width="20" height="9" fill="#a0a0a0"/><rect x="1000" y="320" width="20" height="9" fill="#fff"/><path d="M1000 320h10v6h-10z" fill="#e06c00"/><rect x="1000" y="360" width="20" height="7" fill="#e06c00"/><rect x="1000" y="400" width="20" height="8" fill="#a0a0a0"/><path d="M1005 404h15" stroke="#e06c00" stroke-width="4"/><rect x="1001" y="439" width="20" height="10" fill="#fff"/><path d="M1001 486q9-12 20 0" stroke="#10a0e8" stroke-width="3" fill="#e06c00"/>
          <circle cx="1002" cy="525" r="10" fill="none" stroke="#000" stroke-width="3"/><path d="M992 525h20M1002 515v20" stroke="#000" stroke-width="3"/>
          <path d="M990 727h105v60h-105z" fill="#000"/>
          <path d="M998 740h22M1030 740h16M1060 740h26M998 750h22M1030 750h16M1060 750h26M998 760h22M1030 760h16M1060 760h26M998 770h22M1030 770h16M1060 770h26M998 780h22M1060 780h26M998 733h88" stroke="#e0e0e0" stroke-width="3" stroke-dasharray="4 3"/>
        </g>

        <!-- stray symbols beside the plan -->
        <g class="plan" transform="translate(900 320) scale(.33333)">
          <path d="M26 60h6v-8h6v8h8v-8h-0v8h6v25h4v10h-6v5H22v-13h4z" fill="#000"/>
          <path d="M33 68h4v8h-4zM42 68h4v8h-4z" fill="#a0a0a0"/>
          <path d="M84 65h24v22h-8v14H84zM114 65h26v22h16v14h-44v-12h-6v-8h8zM150 65h26v14h-6v14h-22v-8h-2z" fill="#000"/>
          <path d="M88 70h16v12H88zM118 70h18v12h-18z" fill="#a0a0a0"/><rect x="153" y="68" width="20" height="8" fill="#f00"/>
          <rect x="211" y="18" width="24" height="17" fill="#000"/><rect x="214" y="21" width="18" height="10" fill="#ff8020"/>
          <path d="M243 35h30v3h-30zM275 35h30v3h-30zM307 35h30v3h-30zM340 35h34v3h-34z" fill="#000"/>
          <rect x="244" y="18" width="26" height="17" fill="#000"/><rect x="247" y="21" width="20" height="10" fill="#ffffc0"/>
          <rect x="276" y="18" width="26" height="17" fill="#000"/><rect x="279" y="21" width="20" height="10" fill="#e0c0f0"/>
          <rect x="311" y="18" width="26" height="17" fill="#000"/><rect x="314" y="21" width="20" height="10" fill="#ffc0d0"/>
          <rect x="345" y="18" width="26" height="17" fill="#000"/><rect x="348" y="21" width="20" height="10" fill="#a0d8ff"/>
        </g>
      </svg>
    </section>

    <aside class="rightbar">
      <span class="rb"><svg class="i" viewBox="0 0 20 20"><path d="M3 8v6l2 3h11l2-6V4h-2v4h-1V3h-2v5h-1V3h-2v5H9V3H7v6H6V7H4z" fill="#00d8f0" stroke="#000"/></svg></span>
      <span class="rb"><svg class="i" viewBox="0 0 20 20"><text class="ra" x="1" y="9">A</text><path d="M1 10h8" stroke="#e00"/><use href="#hand" x="5" y="7" width="14" height="13"/></svg></span>
      <span class="rb"><svg class="i" viewBox="0 0 20 20"><path d="M1 4h4v4H1z" fill="#e00"/><path d="M7 3h4v4H7z" fill="#0c0"/><path d="M14 1h4v4h-4z" fill="#00e"/><use href="#hand" x="5" y="7" width="14" height="13"/></svg></span>
      <span class="rb"><svg class="i" viewBox="0 0 20 20"><rect x="1" y="1" width="8" height="8" fill="#e00" stroke="#00c" stroke-width="1.500"/><path d="M11 2h7M14.500 2v6" stroke="#000" stroke-width="1.600"/><use href="#hand" x="3" y="7" width="14" height="13"/></svg></span>
      <span class="rb"><svg class="i" viewBox="0 0 20 20"><path d="M1 9l8-6" stroke="#e00"/><path d="M1 11l12-6" stroke="#00c"/><path d="M6 10l13-8" stroke="#0c0"/><use href="#hand" x="5" y="7" width="14" height="13"/></svg></span>
      <span class="rb"><svg class="i" viewBox="0 0 20 20"><path d="M0 7a10 7 0 0 1 20 0c0 4-3 8-7 8H7C3 15 0 11 0 7z" fill="#00c000"/><path d="M6 12l2-5h4l2 5z" fill="#ff0" stroke="#000"/><use href="#hand" x="4" y="9" width="12" height="11"/></svg></span>
      <span class="rb"><svg class="i" viewBox="0 0 20 20"><ellipse cx="9" cy="5" rx="8" ry="3.500" fill="none" stroke="#e00" stroke-width="1.300"/><use href="#hand" x="5" y="7" width="14" height="13"/></svg></span>
      <span class="rb"><svg class="i" viewBox="0 0 20 20"><text class="rp" x="1" y="7"><tspan fill="#f00">P</tspan><tspan fill="#0a0" dx="1">L</tspan><tspan fill="#00f" dx="1">R</tspan></text><use href="#hand" x="4" y="8" width="13" height="12"/></svg></span>
      <span class="rb"><svg class="i" viewBox="0 0 20 20"><rect x="0.500" y="1" width="19" height="7" fill="#fff" stroke="#e00" stroke-width="1.300"/><text class="rp" x="1" y="7"><tspan fill="#f00">P</tspan><tspan fill="#0a0" dx="1">L</tspan><tspan fill="#00f" dx="1">R</tspan></text><use href="#hand" x="4" y="8" width="13" height="12"/></svg></span>
      <span class="rsep"></span>
      <span class="rb on"><svg class="i" viewBox="0 0 20 20"><rect x="7" y="2" width="5" height="5" fill="#0c0" stroke="#00c"/><path d="M2 15h8l8-7" fill="none" stroke="#000"/><rect x="0" y="13" width="3" height="3" fill="#e00"/><rect x="8" y="13" width="3" height="3" fill="#e00"/><rect x="17" y="6" width="3" height="3" fill="#e00"/></svg></span>
      <span class="rb"><svg class="i" viewBox="0 0 20 20"><rect x="7" y="7" width="5" height="5" fill="#0c0" stroke="#e00" stroke-width="1.300"/></svg></span>
      <span class="rb"><svg class="i" viewBox="0 0 20 20"><path d="M4 3l6 13 4-6 5 5" fill="none" stroke="#e00" stroke-width="1.200"/><circle cx="3" cy="4" r="2" fill="#ff0" stroke="#e00"/></svg></span>
      <span class="rb"><svg class="i" viewBox="0 0 20 20"><path d="M3 17L17 4M11 4h6v6" fill="none" stroke="#000" stroke-width="1.300"/><circle cx="10" cy="10" r=".8" fill="#e00"/></svg></span>
      <span class="rb"><svg class="i" viewBox="0 0 20 20"><path d="M3 17V6l6 8 3-3 7 6" fill="none" stroke="#e00" stroke-width="1.300"/></svg></span>
      <span class="rb"><svg class="i" viewBox="0 0 20 20"><rect x="3" y="4" width="14" height="12" fill="#fff" stroke="#e00" stroke-width="1.500"/><path d="M6 7h8M7 10h7M8 13h4" stroke="#e00" stroke-width="1.300"/></svg></span>
      <span class="rb"><svg class="i" viewBox="0 0 20 20"><rect x="3" y="4" width="14" height="12" fill="#fff" stroke="#0ee" stroke-width="1.500"/><path d="M6 8h8M6 10h8M6 12h8" stroke="#b0b" stroke-dasharray="1 1"/></svg></span>
      <span class="rsep"></span>
      <span class="rb"><svg class="i" viewBox="0 0 20 20"><path d="M0 10h20M10 0v20" stroke="#00008b" stroke-width="1.500"/><rect x="6" y="6" width="8" height="8" fill="#fff" stroke="#00008b" stroke-width="1.500"/></svg></span>
      <span class="rb on"><svg class="i" viewBox="0 0 20 20"><circle cx="10" cy="10" r="3.500" fill="#ff0" stroke="#e00" stroke-width="1.400"/></svg></span>
      <span class="rb on"><svg class="i" viewBox="0 0 20 20"><path d="M4 5l6 8 8-9" fill="none" stroke="#000"/><circle cx="4" cy="5" r="2" fill="#ff0" stroke="#e00"/><circle cx="10" cy="13" r="2" fill="#ff0" stroke="#e00"/><circle cx="18" cy="4" r="2" fill="#ff0" stroke="#e00"/></svg></span>
      <span class="rb"><svg class="i" viewBox="0 0 20 20"><path d="M3 3l14 14M17 3L3 17" stroke="#000" stroke-width="1.300"/><rect x="8" y="8" width="4" height="4" fill="#ff0" stroke="#e00"/></svg></span>
      <span class="rb"><svg class="i" viewBox="0 0 20 20"><path d="M3 12h14" stroke="#e00" stroke-width="1.300"/><path d="M10 1v7" stroke="#00c" stroke-dasharray="2 1"/><circle cx="10" cy="12" r="2.500" fill="#ff0" stroke="#e00"/></svg></span>
      <span class="rb"><svg class="i" viewBox="0 0 20 20"><path d="M3 18L15 6" stroke="#e00" stroke-width="1.200"/><circle cx="13" cy="7" r="2" fill="#ff0" stroke="#e00"/><circle cx="16" cy="11" r="2" fill="#fff" stroke="#00c"/></svg></span>
      <span class="rb"><svg class="i" viewBox="0 0 20 20"><path d="M3 16L17 4" stroke="#000" stroke-width="1.300"/><circle cx="3" cy="16" r="2" fill="#ff0" stroke="#e00"/><circle cx="17" cy="4" r="2" fill="#ff0" stroke="#e00"/><rect x="8" y="8" width="4" height="4" fill="#000"/><circle cx="10" cy="10" r="2" fill="#a00"/></svg></span>
      <span class="rsep last"></span>
    </aside>
  </main>

  <footer class="status"><span class="st-mark"></span><span class="st-panel"></span></footer>
</div>
</body>
</html>
```

FILE: styles.css
```css
* { box-sizing: border-box; }
html, body { margin: 0; height: 100%; overflow: hidden; background: #ece9d8; }
body { font: 12px "Noto Sans CJK SC", "Liberation Sans", sans-serif; color: #000; }
.sprite { position: absolute; width: 0; height: 0; }
.app { display: flex; flex-direction: column; width: 1435px; height: 828px; }

/* title bar */
.titlebar {
  position: relative; flex: 0 0 25px; display: flex; align-items: flex-start; padding-left: 2px; overflow: hidden;
  background: linear-gradient(#0a5ce0 0, #0f6cf0 3px, #0058e8 8px, #0054e3 17px, #0060f0 21px, #0048c8 24px, #0040b8 25px);
}
.logo { width: 20px; font: italic bold 18px/20px "Liberation Serif", serif; color: #ff1020; letter-spacing: -1px; }
.logo-e { color: #ff1020; }
.title { font: bold 13.2px/22px "Liberation Mono", "Noto Sans CJK SC", monospace; color: #fff; white-space: pre; }
.badge {
  position: absolute; left: 976px; top: -29px; width: 47px; height: 47px; padding-top: 29px; border-radius: 50%;
  background: #46b45c; border: 2px solid #c8d8d0; box-shadow: 0 2px 4px rgba(0,0,0,.35);
  font: bold 11px/14px "Liberation Serif", serif; color: #fff; text-align: center;
}
.winbtns { display: flex; gap: 3px; margin: 1px 0 0 auto; }
.wb {
  width: 20px; height: 20px; border: 1px solid #fff; border-radius: 3px;
  background: radial-gradient(circle at 35% 35%, #5a88ee, #2a50d8 80%);
}
.wb.close { width: 18px; border-right: 0; border-radius: 3px 0 0 3px; background: radial-gradient(circle at 35% 35%, #ee8a60, #d84820 80%); }
.wg { display: block; width: 18px; height: 18px; }

/* menu bar */
.menubar { flex: 0 0 20px; display: flex; align-items: center; background: #ece9d8; padding-left: 3px; border-bottom: 1px solid #fff; box-shadow: inset 0 -1px 0 #aca899; }
.applogo { width: 16px; height: 19px; flex: none; }
.mi { padding: 0 6px; font-size: 12px; line-height: 18px; white-space: nowrap; }
.k { display: inline-block; width: 6px; font: 10px "Liberation Mono", monospace; color: #333; }
.mdi { display: flex; gap: 2px; margin-left: auto; }
.mb { width: 16px; height: 16px; background: #f2f0e6; }
.mb:last-child { width: 13px; }
.mg { display: block; width: 16px; height: 16px; }

/* toolbars */
.toolbar { flex: 0 0 25px; display: flex; align-items: center; padding-left: 6px; position: relative; background: #ece9d8; border-top: 1px solid #fff; border-bottom: 1px solid #aca899; }
.toolbar.first { padding-bottom: 2px; }
.toolbar.second { flex-basis: 26px; }
.grip { position: absolute; left: 3px; top: 2px; bottom: 2px; width: 2px; background: #aca899; border-left: 1px solid #fff; }
.b { flex: 0 0 23px; height: 22px; display: flex; align-items: center; justify-content: center; }
.b.pressed { background: #f8f6ee; border: 1px solid #aca899; border-right-color: #fff; border-bottom-color: #fff; }
.i { display: block; width: 18px; height: 18px; flex: none; shape-rendering: crispEdges; }
.sp { flex: 0 0 6px; height: 20px; position: relative; }
.sp::before { content: ""; position: absolute; left: 2px; top: 0; bottom: 0; width: 2px; background: #aca899; border-right: 1px solid #fff; }
.ar { flex: 0 0 13px; display: flex; justify-content: center; }
.ar.small { flex-basis: 12px; }
.ar.wide { flex-basis: 14px; }
.ar::before { content: ""; border: 3px solid transparent; border-top: 3px solid #000; margin-top: 3px; }
.txt-ratio { font: 14px "Liberation Sans", sans-serif; color: #333; }
.txt-db { font: bold 14px "Liberation Serif", serif; }
.txt-p { font: italic bold 17px "Liberation Serif", serif; }
.txt-a { font: bold 14px "Liberation Sans", sans-serif; }
.txt-t { font: bold 15px "Liberation Sans", sans-serif; }
.txt-d { font: bold 14px "DejaVu Sans", sans-serif; }
.plr { font: bold 7px "Liberation Sans", sans-serif; }
.search {
  flex: 0 0 206px; height: 22px; margin-left: 1px; padding-left: 2px; background: #fff; overflow: hidden;
  border: 2px solid; border-color: #555 #f4f2e8 #f4f2e8 #555;
  font: bold 15px/18px "Noto Sans CJK SC", sans-serif; white-space: nowrap;
}
.vgrip { width: 2px; height: 18px; margin-left: 4px; background: #aca899; }
.end { width: 1px; height: 24px; background: #aca899; }

/* main area */
.main { flex: 1; display: flex; min-height: 0; }
.side { flex: 0 0 172px; display: flex; flex-direction: column; background: #ece9d8; padding-left: 3px; }
.side-top { flex: 0 0 17px; display: flex; align-items: center; padding-top: 3px; }
.side-grip { width: 154px; height: 5px; border-top: 1px solid #aca899; border-bottom: 1px solid #aca899; background: #fff; }
.side-x { margin-left: 5px; font: bold 14px/12px "Liberation Sans", sans-serif; }
.cols { flex: 0 0 16px; display: flex; }
.col { height: 16px; display: flex; align-items: center; background: #ece9d8; border: 1px solid; border-color: #fff #716f64 #716f64 #fff; }
.col-a { width: 57px; padding-left: 5px; }
.col-b { width: 30px; justify-content: center; }
.col-c { width: 74px; padding-left: 4px; }
.col-d { width: 6px; }
.ci { width: 18px; height: 14px; }
.cp { width: 19px; height: 14px; }
.dots { margin-left: 20px; font: 12px "Liberation Sans", sans-serif; }
.say { margin-left: 8px; font-weight: 400; font-size: 12px; }
.list { flex: 0 0 642px; margin: 1px 0 0 1px; padding: 0; width: 166px; list-style: none; background: #fff; border-top: 1px solid #aca899; overflow: hidden; }
.row { display: flex; align-items: center; height: 17.03px; padding-left: 3px; }
.cb { flex: none; width: 11px; height: 11px; background: #0ff; border: 1px solid #808080; }
.rd { flex: none; width: 12px; height: 15px; margin-left: 6px; }
.rt { flex: 0 0 28px; margin-left: 4px; font: 12px "Liberation Sans", sans-serif; letter-spacing: 1px; color: #222; }
.re { flex: none; width: 16px; height: 16px; shape-rendering: crispEdges; }
.hscroll { flex: 0 0 18px; display: flex; margin: 4px 1px 0 1px; width: 166px; border: 1px solid #808080; background: #ece9d8; }
.sb { flex: 0 0 16px; display: flex; align-items: center; justify-content: center; background: #ece9d8; border: 1px solid #aca899; }
.thumb { flex: 0 0 67px; background: #ece9d8; border: 1px solid #aca899; }
.track { flex: 1; background: repeating-conic-gradient(#fff 0 25%, #ece9d8 0 50%) 0 0 / 2px 2px; }
.tri-l { border: 5px solid transparent; border-right: 5px solid #000; border-left: 0; }
.tri-r { border: 5px solid transparent; border-left: 5px solid #000; border-right: 0; }
.tabs { flex: 1; display: flex; align-items: center; padding-top: 3px; border-top: 1px solid #808080; margin-top: 1px; }
.tab { flex: 0 0 22px; height: 22px; display: flex; align-items: center; justify-content: center; }
.tab.wide { flex-basis: 24px; }
.tab .i { width: 16px; height: 16px; }
.tab.on { background: #f6f4ec; border: 1px solid #8a887c; border-top-color: #fff; border-left-color: #fff; }
.tsep { flex: 0 0 1px; height: 14px; margin: 0 1px 0 0; background: #808080; }
.work { flex: 1; min-width: 0; }
.canvas { display: block; width: 100%; height: 100%; overflow: visible; }
.plan { shape-rendering: crispEdges; }
.plan-title { font: bold 22px "Noto Sans CJK SC", sans-serif; fill: #000; }
.ruler { font: 9.5px "Liberation Sans", sans-serif; fill: #000; }
.rightbar { flex: 0 0 21px; display: flex; flex-direction: column; padding-top: 8px; overflow: hidden; background: #ece9d8; border-left: 2px solid #fff; }
.rb { flex: 0 0 22px; width: 22px; display: flex; align-items: center; justify-content: center; }
.rb .i { width: 16px; height: 18px; }
.rb.on { background: repeating-conic-gradient(#fff 0 25%, #ece9d8 0 50%) 0 0 / 2px 2px; border-top: 2px solid #aca899; border-left: 2px solid #aca899; }
.rsep { flex: 0 0 6px; position: relative; }
.rsep::before { content: ""; position: absolute; left: 0; right: 0; top: 1px; height: 2px; background: #aca899; border-bottom: 1px solid #fff; }
.rsep.last { margin-top: 21px; }
.ra { font: bold 10px "Liberation Sans", sans-serif; fill: #e00; }
.rp { font: bold 7px "Liberation Sans", sans-serif; }
.status { flex: 0 0 5px; display: flex; background: #ece9d8; border-top: 1px solid #fff; box-shadow: 0 -1px 0 #aca899; position: relative; }
.st-mark { width: 16px; height: 3px; margin: 1px 0 0 9px; background: #f0f; }
.st-panel { width: 2px; margin-left: 6px; background: #aca899; }
```
